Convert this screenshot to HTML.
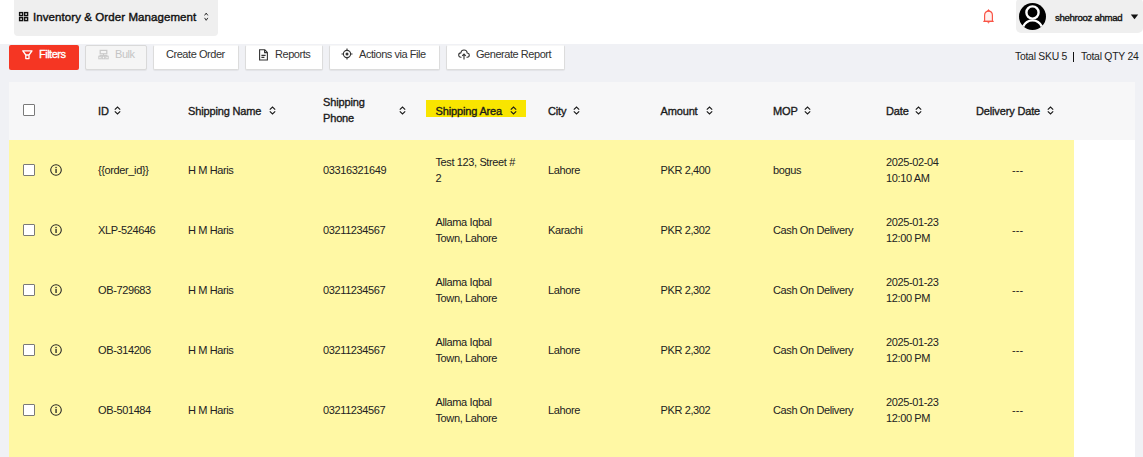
<!DOCTYPE html>
<html><head><meta charset="utf-8">
<style>
*{box-sizing:border-box}
html,body{margin:0;padding:0}
body{width:1143px;height:457px;overflow:hidden;position:relative;background:#fff;font-family:"Liberation Sans",sans-serif;color:#222}
.a{position:absolute;white-space:nowrap}
.bg{position:absolute;left:0;top:44px;width:1143px;height:413px;background:#f0f1f5}
.title{left:14px;top:0;width:204px;height:36px;background:#efefef;border-radius:0 0 4px 4px}
.ttl{left:33px;top:8.5px;font-size:11.5px;font-weight:normal;-webkit-text-stroke:0.4px #111;letter-spacing:0.08px;line-height:16px;color:#111}
.user{left:1016px;top:-2px;width:127px;height:35px;background:#efefef;border-radius:5px}
.uname{left:1055px;top:10.5px;font-size:9.6px;font-weight:normal;-webkit-text-stroke:0.35px #111;letter-spacing:-0.3px;line-height:14px;color:#111}
.btn{position:absolute;top:45px;height:25px;background:#fff;border:1px solid #dcdcdc;border-top-color:#f7f7f7;border-radius:2px;box-shadow:0 1px 1px rgba(0,0,0,.06)}
.bt{position:absolute;top:46px;font-size:11px;line-height:16px;letter-spacing:-0.45px;color:#333;white-space:nowrap}
.tbl{left:9px;top:82px;width:1126px;height:375px;background:#fff}
.hdr{left:9px;top:82px;width:1126px;height:58px;background:#f7f7f8}
.row{position:absolute;left:9px;width:1065px;height:60px;background:#fff8a4}
.h{position:absolute;font-size:11px;font-weight:normal;-webkit-text-stroke:0.35px #1a1a1a;letter-spacing:-0.15px;line-height:16px;color:#1a1a1a;white-space:nowrap}
.c{position:absolute;font-size:11px;letter-spacing:-0.38px;line-height:16px;color:#222;white-space:nowrap}
.cb{position:absolute;width:12px;height:12px;border:1.2px solid #7a7a7a;border-radius:1px;background:#fff}
.srt{position:absolute;width:7px;height:9px}
</style></head><body>
<div class="bg"></div>

<!-- top bar -->
<div class="a title"></div>
<svg class="a" style="left:18px;top:11px" width="12" height="11" viewBox="0 0 12 11">
  <rect x="1.6" y="1.6" width="3" height="3" fill="none" stroke="#111" stroke-width="1.4"/>
  <rect x="6.6" y="1.6" width="3" height="3" fill="none" stroke="#111" stroke-width="1.4"/>
  <rect x="1.6" y="6.6" width="3" height="3" fill="none" stroke="#111" stroke-width="1.4"/>
  <rect x="6.6" y="6.6" width="3" height="3" fill="none" stroke="#111" stroke-width="1.4"/>
</svg>
<div class="a ttl">Inventory &amp; Order Management</div>
<svg class="a" style="left:203px;top:11px" width="6" height="11" viewBox="0 0 6 11">
  <path d="M1.6 4.4 L3.2 2.1 L4.8 4.4 M1.6 6.9 L3.2 9.3 L4.8 6.9" fill="none" stroke="#222" stroke-width="0.95"/>
</svg>

<svg class="a" style="left:982px;top:9px" width="13" height="16" viewBox="0 0 13 16">
  <path d="M2.6 12.4 L2.6 6.2 C2.6 3.8 4.2 2.1 6.5 2.1 C8.8 2.1 10.4 3.8 10.4 6.2 L10.4 12.4 Z" fill="#fff0ee" stroke="#f95446" stroke-width="1.2"/>
  <path d="M1.3 12.4 L11.7 12.4" stroke="#f95446" stroke-width="1.2"/>
  <path d="M5.6 1.8 L6.5 0.6 L7.4 1.8 Z" fill="#f9483a" stroke="#f9483a" stroke-width="0.8"/>
  <path d="M5.3 13.3 Q6.5 15.6 7.7 13.3 Z" fill="#f9483a"/>
</svg>

<div class="a user"></div>
<svg class="a" style="left:1019px;top:3px" width="27" height="27" viewBox="0 0 27 27">
  <circle cx="13.5" cy="13.5" r="13.5" fill="#000"/>
  <circle cx="13.5" cy="9.5" r="6.1" fill="none" stroke="#fff" stroke-width="2.4"/>
  <path d="M4.2 23.6 C6.2 19.4 9.5 17.4 13.5 17.4 C17.5 17.4 20.8 19.4 22.8 23.6" fill="none" stroke="#fff" stroke-width="2.4"/>
</svg>
<div class="a uname">shehrooz ahmad</div>
<svg class="a" style="left:1130px;top:14px" width="9" height="6" viewBox="0 0 9 6">
  <path d="M0.8 0.5 L8.2 0.5 L4.5 5.3 Z" fill="#111"/>
</svg>

<!-- toolbar -->
<div class="btn" style="left:9px;width:70px;background:#f53623;border:none;box-shadow:none"></div>
<svg class="a" style="left:22px;top:49.5px" width="11" height="10" viewBox="0 0 11 10">
  <path d="M0.8 0.8 L10.0 0.8 L7.0 5.0 L7.0 8.6 L3.8 8.6 L3.8 5.0 Z M3.8 5.0 L7.0 5.0" fill="none" stroke="#fff" stroke-width="1.3" stroke-linejoin="round"/>
</svg>
<div class="bt" style="left:39px;color:#fff;-webkit-text-stroke:0.35px #fff;letter-spacing:-0.5px">Filters</div>

<div class="btn" style="left:85px;width:62px;background:#f5f5f5;border-color:#d9d9d9"></div>
<svg class="a" style="left:98px;top:49px" width="11" height="11" viewBox="0 0 11 11">
  <rect x="2.2" y="1.4" width="6.6" height="3.4" fill="none" stroke="#c9c9c9" stroke-width="1.2"/>
  <path d="M5.5 4.8 L5.5 6.6 M1.8 6.6 L9.2 6.6 M1.8 6.6 L1.8 7.4 M9.2 6.6 L9.2 7.4" fill="none" stroke="#c9c9c9" stroke-width="1"/>
  <rect x="0.8" y="7.2" width="2.4" height="2.6" fill="none" stroke="#c9c9c9" stroke-width="1"/>
  <rect x="4.3" y="7.2" width="2.4" height="2.6" fill="none" stroke="#c9c9c9" stroke-width="1"/>
  <rect x="7.8" y="7.2" width="2.4" height="2.6" fill="none" stroke="#c9c9c9" stroke-width="1"/>
</svg>
<div class="bt" style="left:115px;color:#c4c4c4">Bulk</div>

<div class="btn" style="left:153px;width:86px"></div>
<div class="bt" style="left:166px">Create Order</div>

<div class="btn" style="left:245px;width:78px"></div>
<svg class="a" style="left:258px;top:49px" width="11" height="12" viewBox="0 0 11 12">
  <path d="M1.6 0.8 L6.8 0.8 L9.4 3.4 L9.4 11 L1.6 11 Z M6.6 0.8 L6.6 3.6 L9.4 3.6 M3.4 6.4 L7.6 6.4 M3.4 8.4 L6.4 8.4" fill="none" stroke="#333" stroke-width="1.1"/>
</svg>
<div class="bt" style="left:275px">Reports</div>

<div class="btn" style="left:329px;width:111px"></div>
<svg class="a" style="left:341px;top:48px" width="12" height="12" viewBox="0 0 12 12">
  <circle cx="6" cy="6" r="3.6" fill="none" stroke="#333" stroke-width="1.1"/>
  <circle cx="6" cy="6" r="1.5" fill="#333"/>
  <path d="M6 0.5 L6 2.4 M6 9.6 L6 11.5 M0.5 6 L2.4 6 M9.6 6 L11.5 6" stroke="#333" stroke-width="1.1"/>
</svg>
<div class="bt" style="left:359px">Actions via File</div>

<div class="btn" style="left:446px;width:119px"></div>
<svg class="a" style="left:458px;top:49px" width="12" height="11" viewBox="0 0 12 11">
  <path d="M3.5 8.2 L2.8 8.2 C1.5 8.2 0.7 7.2 0.7 6 C0.7 4.8 1.6 3.9 2.8 3.9 C3.1 2.2 4.5 1 6 1 C7.8 1 9.1 2.3 9.2 4 C10.4 4.1 11.3 5 11.3 6.1 C11.3 7.3 10.4 8.2 9.2 8.2 L8.5 8.2" fill="none" stroke="#333" stroke-width="1.1"/>
  <path d="M6 10.5 L6 5 M4.2 6.8 L6 5 L7.8 6.8" fill="none" stroke="#333" stroke-width="1.1"/>
</svg>
<div class="bt" style="left:476px">Generate Report</div>

<div class="bt" style="left:1015px;top:48.8px;font-size:10.4px;letter-spacing:-0.25px;color:#222">Total SKU 5</div>
<div class="a" style="left:1073px;top:52px;width:1px;height:10px;background:#111"></div>
<div class="bt" style="left:1081px;top:48.8px;font-size:10.4px;letter-spacing:-0.25px;color:#222">Total QTY 24</div>

<!-- table -->
<div class="a tbl"></div>
<div class="a hdr"></div>
<!-- rows -->
<div class="cb" style="left:23px;top:104px"></div>
<div class="a" style="left:426px;top:100px;width:100px;height:17px;background:#f9e500"></div>
<div class="h" style="left:98px;top:102.5px">ID</div>
<svg class="srt" style="left:114.0px;top:106px" viewBox="0 0 7 9"><path d="M0.8 3.6 L3.5 1 L6.2 3.6 M0.8 5.4 L3.5 8 L6.2 5.4" fill="none" stroke="#1a1a1a" stroke-width="1.15"/></svg>
<div class="h" style="left:188px;top:102.5px">Shipping Name</div>
<svg class="srt" style="left:268.5px;top:106px" viewBox="0 0 7 9"><path d="M0.8 3.6 L3.5 1 L6.2 3.6 M0.8 5.4 L3.5 8 L6.2 5.4" fill="none" stroke="#1a1a1a" stroke-width="1.15"/></svg>
<div class="h" style="left:435.5px;top:102.5px">Shipping Area</div>
<svg class="srt" style="left:509.5px;top:106px" viewBox="0 0 7 9"><path d="M0.8 3.6 L3.5 1 L6.2 3.6 M0.8 5.4 L3.5 8 L6.2 5.4" fill="none" stroke="#1a1a1a" stroke-width="1.15"/></svg>
<div class="h" style="left:548px;top:102.5px">City</div>
<svg class="srt" style="left:573.0px;top:106px" viewBox="0 0 7 9"><path d="M0.8 3.6 L3.5 1 L6.2 3.6 M0.8 5.4 L3.5 8 L6.2 5.4" fill="none" stroke="#1a1a1a" stroke-width="1.15"/></svg>
<div class="h" style="left:660.5px;top:102.5px">Amount</div>
<svg class="srt" style="left:705.5px;top:106px" viewBox="0 0 7 9"><path d="M0.8 3.6 L3.5 1 L6.2 3.6 M0.8 5.4 L3.5 8 L6.2 5.4" fill="none" stroke="#1a1a1a" stroke-width="1.15"/></svg>
<div class="h" style="left:773px;top:102.5px">MOP</div>
<svg class="srt" style="left:803.5px;top:106px" viewBox="0 0 7 9"><path d="M0.8 3.6 L3.5 1 L6.2 3.6 M0.8 5.4 L3.5 8 L6.2 5.4" fill="none" stroke="#1a1a1a" stroke-width="1.15"/></svg>
<div class="h" style="left:886px;top:102.5px">Date</div>
<svg class="srt" style="left:914.5px;top:106px" viewBox="0 0 7 9"><path d="M0.8 3.6 L3.5 1 L6.2 3.6 M0.8 5.4 L3.5 8 L6.2 5.4" fill="none" stroke="#1a1a1a" stroke-width="1.15"/></svg>
<div class="h" style="left:976px;top:102.5px">Delivery Date</div>
<svg class="srt" style="left:1046.5px;top:106px" viewBox="0 0 7 9"><path d="M0.8 3.6 L3.5 1 L6.2 3.6 M0.8 5.4 L3.5 8 L6.2 5.4" fill="none" stroke="#1a1a1a" stroke-width="1.15"/></svg>
<div class="h" style="left:323px;top:93.5px">Shipping<br>Phone</div>
<svg class="srt" style="left:398.5px;top:106px" viewBox="0 0 7 9"><path d="M0.8 3.6 L3.5 1 L6.2 3.6 M0.8 5.4 L3.5 8 L6.2 5.4" fill="none" stroke="#1a1a1a" stroke-width="1.15"/></svg>
<div class="row" style="top:140px"></div>
<div class="cb" style="left:23px;top:164px"></div>
<svg class="a" style="left:50px;top:164px" width="12" height="12" viewBox="0 0 12 12"><circle cx="6" cy="6" r="5.3" fill="none" stroke="#222" stroke-width="1.05"/><rect x="5.4" y="5" width="1.3" height="4" fill="#222"/><rect x="5.4" y="2.9" width="1.3" height="1.3" fill="#222"/></svg>
<div class="c" style="left:98px;top:162.3px">{{order_id}}</div>
<div class="c" style="left:188px;top:162.3px">H M Haris</div>
<div class="c" style="left:323px;top:162.3px">03316321649</div>
<div class="c" style="left:435.5px;top:153.9px">Test 123, Street #<br>2</div>
<div class="c" style="left:548px;top:162.3px">Lahore</div>
<div class="c" style="left:660.5px;top:162.3px">PKR 2,400</div>
<div class="c" style="left:773px;top:162.3px">bogus</div>
<div class="c" style="left:886px;top:153.9px">2025-02-04<br>10:10 AM</div>
<div class="c" style="left:1012px;top:162.3px;letter-spacing:0.1px">---</div>
<div class="row" style="top:200px"></div>
<div class="cb" style="left:23px;top:224px"></div>
<svg class="a" style="left:50px;top:224px" width="12" height="12" viewBox="0 0 12 12"><circle cx="6" cy="6" r="5.3" fill="none" stroke="#222" stroke-width="1.05"/><rect x="5.4" y="5" width="1.3" height="4" fill="#222"/><rect x="5.4" y="2.9" width="1.3" height="1.3" fill="#222"/></svg>
<div class="c" style="left:98px;top:222.3px">XLP-524646</div>
<div class="c" style="left:188px;top:222.3px">H M Haris</div>
<div class="c" style="left:323px;top:222.3px">03211234567</div>
<div class="c" style="left:435.5px;top:213.9px">Allama Iqbal<br>Town, Lahore</div>
<div class="c" style="left:548px;top:222.3px">Karachi</div>
<div class="c" style="left:660.5px;top:222.3px">PKR 2,302</div>
<div class="c" style="left:773px;top:222.3px">Cash On Delivery</div>
<div class="c" style="left:886px;top:213.9px">2025-01-23<br>12:00 PM</div>
<div class="c" style="left:1012px;top:222.3px;letter-spacing:0.1px">---</div>
<div class="row" style="top:260px"></div>
<div class="cb" style="left:23px;top:284px"></div>
<svg class="a" style="left:50px;top:284px" width="12" height="12" viewBox="0 0 12 12"><circle cx="6" cy="6" r="5.3" fill="none" stroke="#222" stroke-width="1.05"/><rect x="5.4" y="5" width="1.3" height="4" fill="#222"/><rect x="5.4" y="2.9" width="1.3" height="1.3" fill="#222"/></svg>
<div class="c" style="left:98px;top:282.3px">OB-729683</div>
<div class="c" style="left:188px;top:282.3px">H M Haris</div>
<div class="c" style="left:323px;top:282.3px">03211234567</div>
<div class="c" style="left:435.5px;top:273.9px">Allama Iqbal<br>Town, Lahore</div>
<div class="c" style="left:548px;top:282.3px">Lahore</div>
<div class="c" style="left:660.5px;top:282.3px">PKR 2,302</div>
<div class="c" style="left:773px;top:282.3px">Cash On Delivery</div>
<div class="c" style="left:886px;top:273.9px">2025-01-23<br>12:00 PM</div>
<div class="c" style="left:1012px;top:282.3px;letter-spacing:0.1px">---</div>
<div class="row" style="top:320px"></div>
<div class="cb" style="left:23px;top:344px"></div>
<svg class="a" style="left:50px;top:344px" width="12" height="12" viewBox="0 0 12 12"><circle cx="6" cy="6" r="5.3" fill="none" stroke="#222" stroke-width="1.05"/><rect x="5.4" y="5" width="1.3" height="4" fill="#222"/><rect x="5.4" y="2.9" width="1.3" height="1.3" fill="#222"/></svg>
<div class="c" style="left:98px;top:342.3px">OB-314206</div>
<div class="c" style="left:188px;top:342.3px">H M Haris</div>
<div class="c" style="left:323px;top:342.3px">03211234567</div>
<div class="c" style="left:435.5px;top:333.9px">Allama Iqbal<br>Town, Lahore</div>
<div class="c" style="left:548px;top:342.3px">Lahore</div>
<div class="c" style="left:660.5px;top:342.3px">PKR 2,302</div>
<div class="c" style="left:773px;top:342.3px">Cash On Delivery</div>
<div class="c" style="left:886px;top:333.9px">2025-01-23<br>12:00 PM</div>
<div class="c" style="left:1012px;top:342.3px;letter-spacing:0.1px">---</div>
<div class="row" style="top:380px"></div>
<div class="cb" style="left:23px;top:404px"></div>
<svg class="a" style="left:50px;top:404px" width="12" height="12" viewBox="0 0 12 12"><circle cx="6" cy="6" r="5.3" fill="none" stroke="#222" stroke-width="1.05"/><rect x="5.4" y="5" width="1.3" height="4" fill="#222"/><rect x="5.4" y="2.9" width="1.3" height="1.3" fill="#222"/></svg>
<div class="c" style="left:98px;top:402.3px">OB-501484</div>
<div class="c" style="left:188px;top:402.3px">H M Haris</div>
<div class="c" style="left:323px;top:402.3px">03211234567</div>
<div class="c" style="left:435.5px;top:393.9px">Allama Iqbal<br>Town, Lahore</div>
<div class="c" style="left:548px;top:402.3px">Lahore</div>
<div class="c" style="left:660.5px;top:402.3px">PKR 2,302</div>
<div class="c" style="left:773px;top:402.3px">Cash On Delivery</div>
<div class="c" style="left:886px;top:393.9px">2025-01-23<br>12:00 PM</div>
<div class="c" style="left:1012px;top:402.3px;letter-spacing:0.1px">---</div>
<div class="row" style="top:440px;height:17px"></div>
<!-- /rows -->
</body></html>
